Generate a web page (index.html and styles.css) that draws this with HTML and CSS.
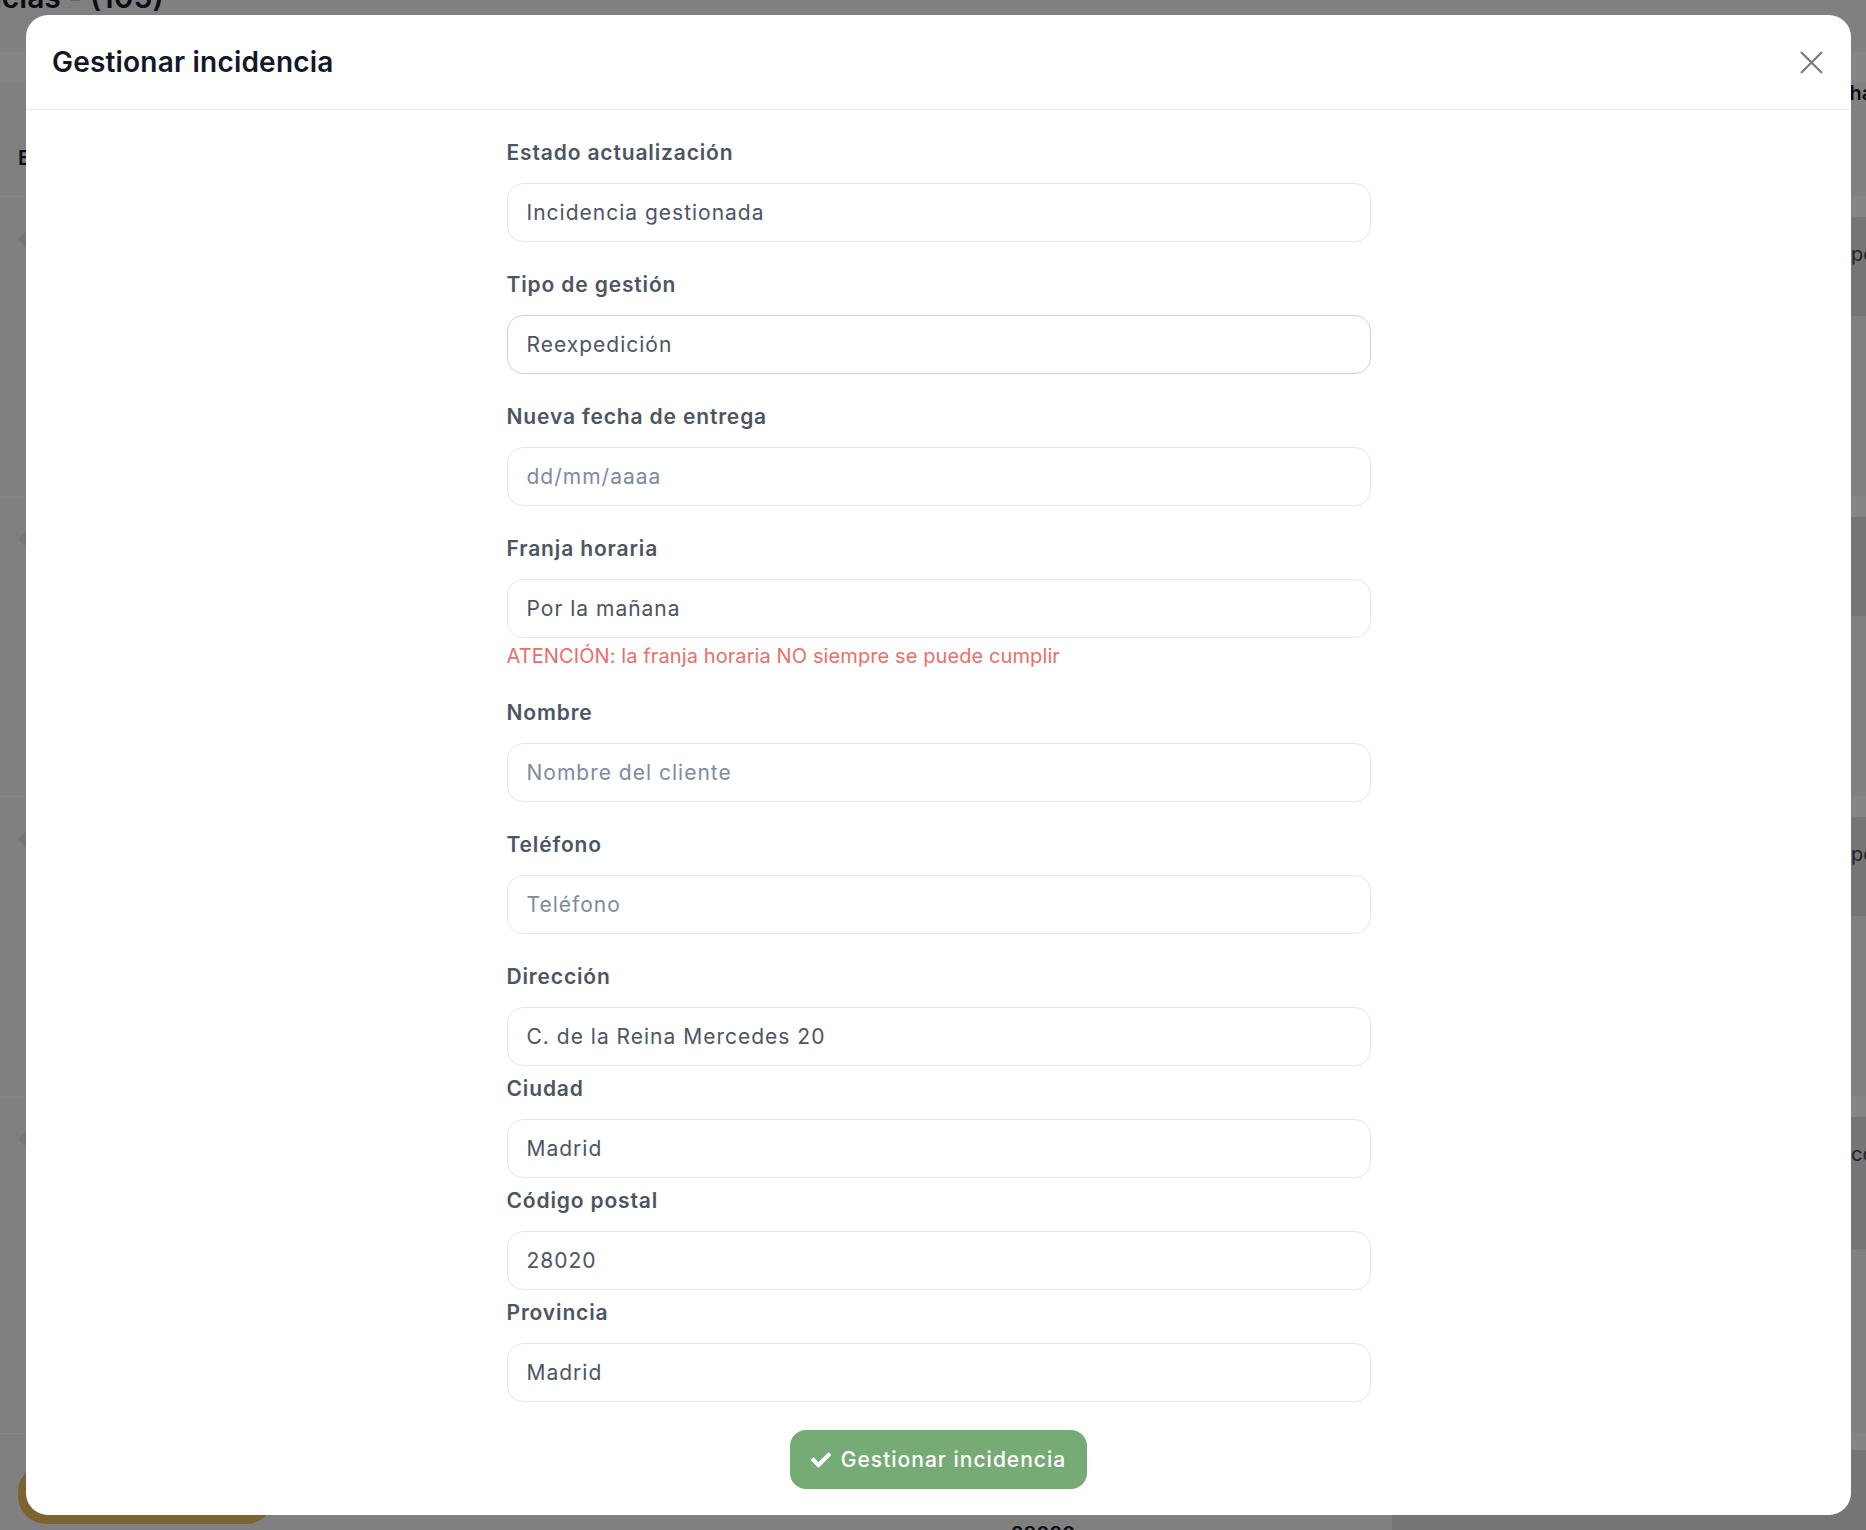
FILE: index.html
```html
<!DOCTYPE html>
<html lang="es">
<head>
  <meta charset="UTF-8">
  <title>Incidencias</title>
  <meta name="viewport" content="width=device-width, initial-scale=1.0">
  <link rel="stylesheet" href="styles.css">
</head>
<body>
  <!-- Página de fondo (queda detrás del modal) -->
  <div class="page">
    <h1 class="page-title">Incidencias - (105)</h1>
    <div class="table-filters"></div>
    <div class="table-head">
      <div class="th th-first">Estado</div>
      <div class="th th-side">Fecha</div>
    </div>
    <div class="table-row">
      <div><span class="row-toggle"></span></div>
      <div class="row-side"><div class="side-strip"></div><div class="side-cell">pcs</div></div>
    </div>
    <div class="table-row">
      <div><span class="row-toggle"></span></div>
      <div class="row-side"><div class="side-strip"></div><div class="side-cell"></div></div>
    </div>
    <div class="table-row">
      <div><span class="row-toggle"></span></div>
      <div class="row-side"><div class="side-strip"></div><div class="side-cell">pendiente</div></div>
    </div>
    <div class="table-row table-row--tall">
      <div><span class="row-toggle"></span></div>
      <div class="row-side"><div class="side-strip"></div><div class="side-cell side-cell--tall">correos</div></div>
    </div>
    <div class="table-row table-row--last">
      <div><span class="btn-gold"></span></div>
      <div class="cell-cp">28020</div>
      <div class="row-side"><div class="side-strip side-strip--short"></div><div class="side-cell side-cell--tall"></div></div>
    </div>
  </div>

  <!-- Modal -->
  <div class="backdrop">
    <div class="modal">
      <div class="modal-header">
        <h3 class="modal-title">Gestionar incidencia</h3>
        <button type="button" class="modal-close" aria-label="Cerrar">
          <svg width="23" height="23" viewBox="0 0 23 23">
            <path d="M1 1 L22 22 M22 1 L1 22" stroke="#7b7b7b" stroke-width="2.2" fill="none"/>
          </svg>
        </button>
      </div>

      <form class="modal-body">
        <div class="field">
          <label>Estado actualización</label>
          <select class="input">
            <option>Incidencia gestionada</option>
          </select>
        </div>

        <div class="field">
          <label>Tipo de gestión</label>
          <select class="input input--focus">
            <option>Reexpedición</option>
          </select>
        </div>

        <div class="field">
          <label>Nueva fecha de entrega</label>
          <input type="text" class="input" placeholder="dd/mm/aaaa">
        </div>

        <div class="field">
          <label>Franja horaria</label>
          <select class="input">
            <option>Por la mañana</option>
          </select>
          <p class="field-hint">ATENCIÓN: la franja horaria NO siempre se puede cumplir</p>
        </div>

        <div class="field">
          <label>Nombre</label>
          <input type="text" class="input" placeholder="Nombre del cliente">
        </div>

        <div class="field">
          <label>Teléfono</label>
          <input type="text" class="input" placeholder="Teléfono">
        </div>

        <div class="field field--compact">
          <label>Dirección</label>
          <input type="text" class="input" value="C. de la Reina Mercedes 20">
        </div>

        <div class="field field--compact">
          <label>Ciudad</label>
          <input type="text" class="input" value="Madrid">
        </div>

        <div class="field field--compact">
          <label>Código postal</label>
          <input type="text" class="input" value="28020">
        </div>

        <div class="field field--last">
          <label>Provincia</label>
          <input type="text" class="input" value="Madrid">
        </div>

        <button type="button" class="btn-submit">
          <svg width="20" height="20" viewBox="0 0 512 512">
            <path fill="#fff" d="M173.9 439.4l-166.4-166.4c-10-10-10-26.2 0-36.2l36.2-36.2c10-10 26.2-10 36.2 0L192 312.7 432.1 72.6c10-10 26.2-10 36.2 0l36.2 36.2c10 10 10 26.2 0 36.2l-294.4 294.4c-10 10-26.2 10-36.2 0z"/>
          </svg>
          Gestionar incidencia
        </button>
      </form>
    </div>
  </div>
</body>
</html>
```

FILE: styles.css
```css
* {
  box-sizing: border-box;
}

html, body {
  margin: 0;
  height: 100%;
}

body {
  font-family: Inter, "Noto Sans", sans-serif;
  background-color: #f6f6f6;
  color: #111827;
  overflow: hidden;
}

/* ---------- página de fondo ---------- */

.page {
  height: 1530px;
  overflow: hidden;
}

.page-title {
  font-size: 30px;
  font-weight: 600;
  line-height: 36px;
  margin: -21px 0 37px -105px;
  white-space: nowrap;
}

.table-filters {
  height: 31px;
  background-color: #fff;
}

.table-head,
.table-row {
  display: grid;
  grid-template-columns: 256px 737px 381px 1fr;
  padding-left: 18px;
}

.table-head {
  height: 113px;
}

.th {
  font-size: 20px;
  font-weight: 600;
  line-height: 26px;
}

.th-first {
  padding-top: 62px;
}

.th-side {
  grid-column: 4;
  padding-left: 423px;
  line-height: 20px;
  white-space: nowrap;
}

.table-row {
  height: 300px;
  border-top: 1px solid #fff;
}

.table-row--tall {
  height: 337px;
}

.table-row--last {
  height: 200px;
}

.row-toggle {
  display: block;
  width: 20px;
  height: 20px;
  margin: 32px 0 0 4px;
  background-color: #e2e2e2;
  border-radius: 3px;
  transform: rotate(45deg);
}

.row-side {
  grid-column: 4;
}

.side-strip {
  height: 20px;
  background-color: #fff;
}

.side-strip--short {
  height: 16px;
}

.side-cell {
  height: 99px;
  padding: 24px 0 0 459px;
  background-color: #e0e1e4;
  font-size: 20px;
  line-height: 26px;
  color: #374151;
  white-space: nowrap;
}

.side-cell--tall {
  height: 132px;
}

.btn-gold {
  display: block;
  width: 256px;
  height: 60px;
  margin-top: 30px;
  background-color: #ecbe60;
  border-radius: 28px;
}

.cell-cp {
  grid-column: 3;
  padding-top: 87px;
  font-size: 20px;
  font-weight: 600;
  line-height: 26px;
}

/* ---------- modal ---------- */

.backdrop {
  position: fixed;
  top: 0;
  left: 0;
  right: 0;
  bottom: 0;
  padding: 15px 15px 0 26px;
  background-color: rgba(0, 0, 0, 0.48);
}

.modal {
  background-color: #fff;
  border-radius: 22px;
}

.modal-header {
  display: flex;
  align-items: center;
  justify-content: space-between;
  height: 95px;
  padding: 0 28px 0 26px;
  border-bottom: 1px solid #ececec;
}

.modal-title {
  margin: 0;
  font-size: 28px;
  font-weight: 600;
  letter-spacing: 0.2px;
  color: #111827;
}

.modal-close {
  display: flex;
  padding: 0;
  border: 0;
  background: none;
  cursor: pointer;
}

.modal-body {
  width: 864px;
  margin: 0 auto;
  padding: 28px 0 26px;
}

.field {
  margin-bottom: 28px;
}

.field--compact {
  margin-bottom: 8px;
}

.field--last {
  margin-bottom: 0;
}

.field label {
  display: block;
  margin-bottom: 15px;
  font-size: 21px;
  font-weight: 600;
  line-height: 30px;
  letter-spacing: 0.85px;
  color: #4b5563;
}

.input {
  display: block;
  width: 100%;
  height: 59px;
  padding: 0 19px;
  border: 1px solid #e5e7eb;
  border-radius: 16px;
  background-color: #fff;
  font-family: inherit;
  font-size: 21px;
  letter-spacing: 1px;
  color: #4b5563;
  appearance: none;
  -webkit-appearance: none;
  outline: none;
}

.input::placeholder {
  color: #7d8ba1;
  opacity: 1;
}

.input--focus {
  border-color: #cdd1d8;
}

.field-hint {
  margin: 5px 0 0;
  font-size: 20px;
  line-height: 27px;
  letter-spacing: 0.1px;
  color: #e76f6d;
}

.btn-submit {
  display: flex;
  align-items: center;
  gap: 10px;
  height: 59px;
  margin: 28px auto 0;
  padding: 0 21px;
  border: 0;
  border-radius: 16px;
  background-color: #77ab76;
  font-family: inherit;
  font-size: 21px;
  font-weight: 500;
  letter-spacing: 1px;
  color: #fff;
  cursor: pointer;
}
```
